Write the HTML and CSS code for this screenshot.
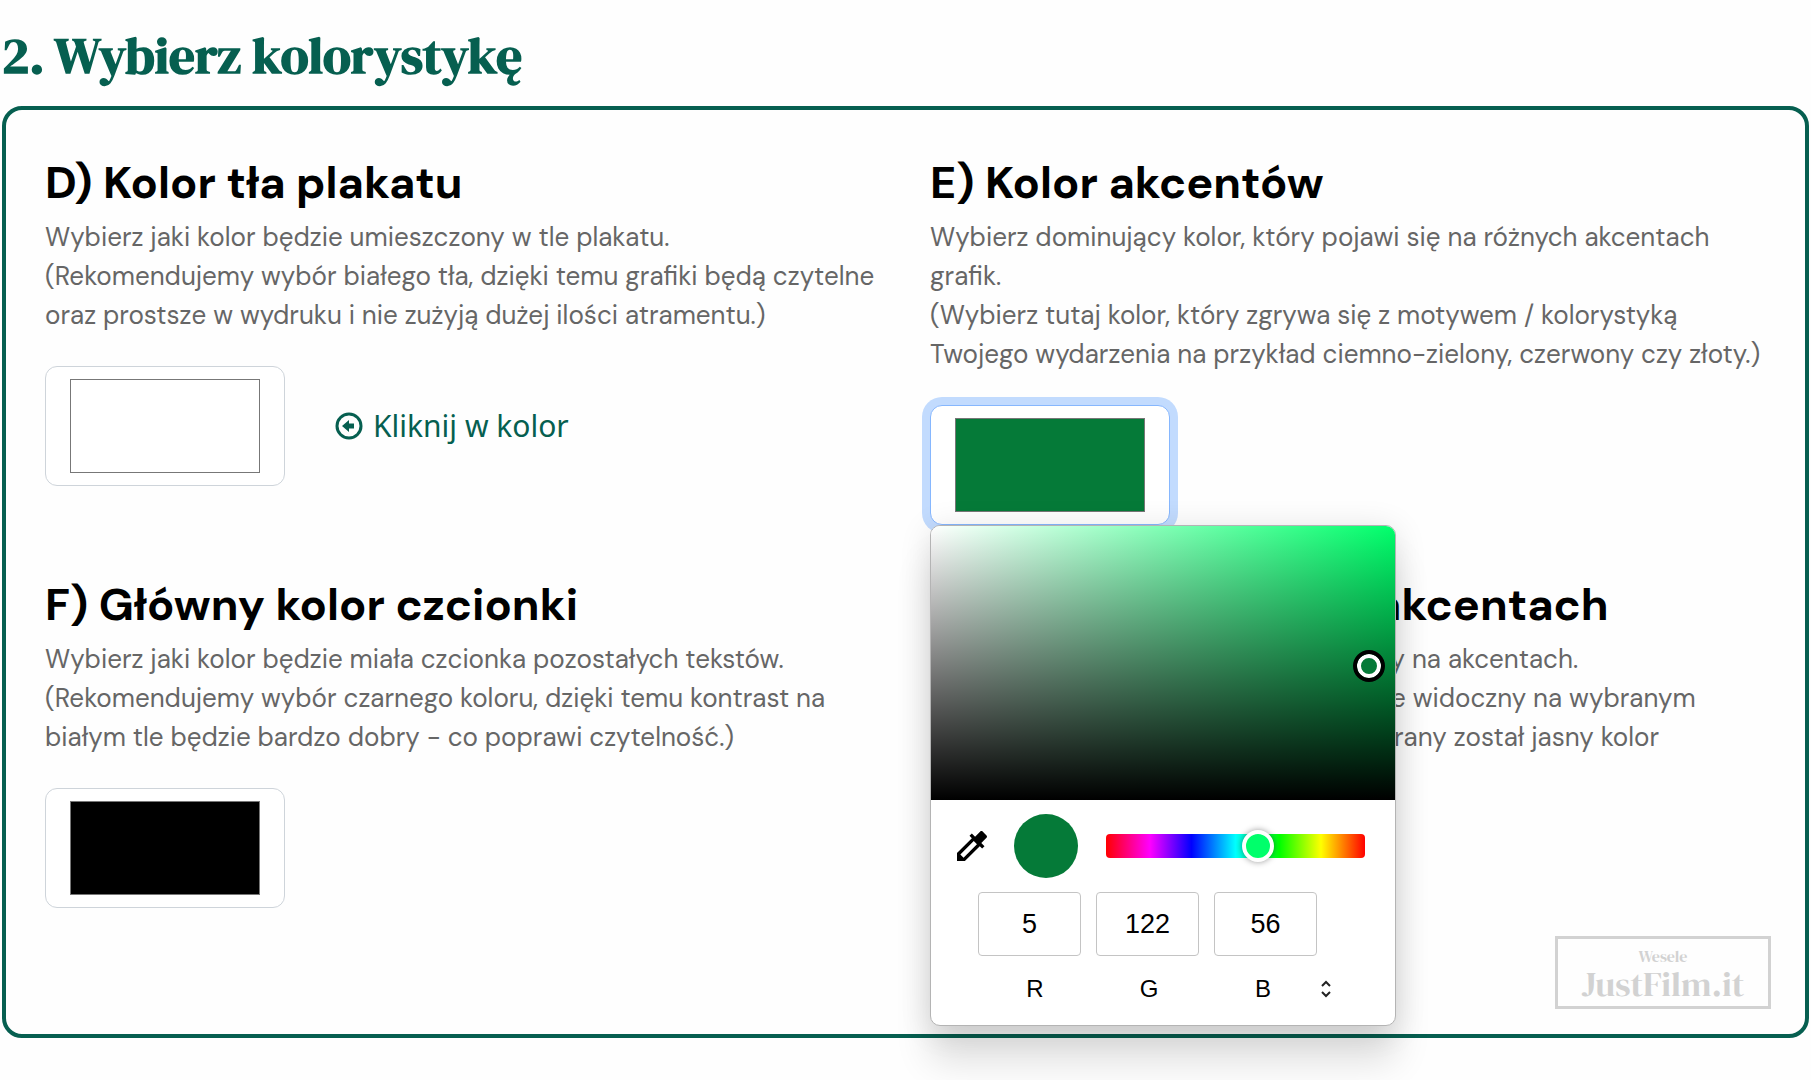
FILE: index.html
```html
<!DOCTYPE html>
<html lang="pl">
<head>
<meta charset="utf-8">
<title>Wybierz kolorystykę</title>
<link rel="stylesheet" href="styles.css">
</head>
<body>
<main class="page">
  <h2 class="page-title">2. Wybierz kolorystykę</h2>
  <section class="panel">
    <div class="option">
      <h3 class="option-title"><label for="background">D) Kolor tła plakatu</label></h3>
      <p class="option-text">Wybierz jaki kolor będzie umieszczony w tle plakatu.<br>(Rekomendujemy wybór białego tła, dzięki temu grafiki będą czytelne oraz prostsze w wydruku i nie zużyją dużej ilości atramentu.)</p>
      <div class="picker-row">
        <input class="swatch" type="color" id="background" value="#ffffff">
        <span class="hint">
          <svg class="hint-icon" viewBox="0 0 28 28" aria-hidden="true"><circle cx="14" cy="14" r="12" fill="none" stroke="currentColor" stroke-width="3"/><path d="M7 14l7-6v3.500h5v5h-5V20z" fill="currentColor"/></svg>
          Kliknij w kolor
        </span>
      </div>
    </div>

    <div class="option">
      <h3 class="option-title"><label for="accent">E) Kolor akcentów</label></h3>
      <p class="option-text">Wybierz dominujący kolor, który pojawi się na różnych akcentach grafik.<br>(Wybierz tutaj kolor, który zgrywa się z motywem / kolorystyką Twojego wydarzenia na przykład ciemno-zielony, czerwony czy złoty.)</p>
      <div class="picker-row">
        <input class="swatch swatch-active" type="color" id="accent" value="#057a38">
        <div class="popup">
          <div class="shade"><span class="shade-handle"></span></div>
          <div class="popup-tools">
            <button class="dropper" type="button" aria-label="Pobierz kolor z ekranu">
              <svg viewBox="0 0 24 24" width="40" height="40" aria-hidden="true"><path d="M20.710 5.630l-2.340-2.340c-.39-.39-1.020-.39-1.410 0l-3.120 3.120-1.930-1.910-1.410 1.410 1.420 1.420L3 16.250V21h4.750l8.920-8.920 1.420 1.420 1.410-1.410-1.920-1.920 3.120-3.120c.4-.4.4-1.030.01-1.420zM6.920 19L5 17.080l8.060-8.060 1.920 1.920L6.920 19z"/></svg>
            </button>
            <span class="preview"></span>
            <input class="hue" type="range" min="0" max="100" value="60" aria-label="Odcień">
          </div>
          <div class="channels">
            <input class="channel" type="text" id="red" value="5">
            <input class="channel" type="text" id="green" value="122">
            <input class="channel" type="text" id="blue" value="56">
          </div>
          <div class="channel-names">
            <label for="red">R</label>
            <label for="green">G</label>
            <label for="blue">B</label>
            <button class="format" type="button" aria-label="Zmień format">
              <svg viewBox="0 0 12 18" width="12" height="18" aria-hidden="true"><path d="M2 6l4-4 4 4M2 12l4 4 4-4" fill="none" stroke="#222" stroke-width="2"/></svg>
            </button>
          </div>
        </div>
      </div>
    </div>

    <div class="option">
      <h3 class="option-title"><label for="font">F) Główny kolor czcionki</label></h3>
      <p class="option-text">Wybierz jaki kolor będzie miała czcionka pozostałych tekstów.<br>(Rekomendujemy wybór czarnego koloru, dzięki temu kontrast na białym tle będzie bardzo dobry - co poprawi czytelność.)</p>
      <div class="picker-row">
        <input class="swatch" type="color" id="font" value="#000000">
      </div>
    </div>

    <div class="option">
      <h3 class="option-title"><label for="accent-font">G) Kolor czcionki na akcentach</label></h3>
      <p class="option-text">Wybierz jaki kolor czcionki będzie użyty na akcentach.<br>(Wybierz taki kolor, który będzie dobrze widoczny na wybranym akcencie, na przykład ciemny, gdy wybrany został jasny kolor<br>akcentów.)</p>
      <div class="picker-row">
        <input class="swatch" type="color" id="accent-font" value="#ffffff">
      </div>
    </div>

    <div class="brand"><span class="brand-top">Wesele</span><span class="brand-name">JustFilm.it</span></div>
  </section>
</main>
</body>
</html>
```
FILE: styles.css
```css
* { box-sizing: border-box; }

body {
  margin: 0;
  min-height: 100vh;
  background: #fefefe;
  color: #000;
  font-family: "DM Sans", Inter, sans-serif;
}

h2, h3, p { margin: 0; }

.page { padding: 23px 2px 42px; }

.page-title {
  font: 700 51px/64px "DM Serif Display", "Liberation Serif", serif;
  color: #065f50;
}

.panel {
  position: relative;
  display: grid;
  grid-template-columns: 1fr 1fr;
  gap: 52px 49px;
  margin-top: 19px;
  padding: 45px 39px 87px;
  border: 4px solid #065f50;
  border-radius: 20px;
}

.option-title {
  font-size: 45px;
  font-weight: 700;
  line-height: 56px;
  white-space: nowrap;
}

.option-text {
  margin: 7px 0 31px;
  font-size: 26px;
  line-height: 39px;
  color: #666;
}

.picker-row {
  position: relative;
  display: flex;
  align-items: center;
  gap: 50px;
}

.swatch {
  width: 240px;
  height: 120px;
  padding: 12px 24px;
  border: 1px solid #ced4da;
  border-radius: 12px;
  background: #fff;
}

.swatch::-webkit-color-swatch-wrapper { padding: 0; }
.swatch::-webkit-color-swatch { border: 1px solid #777; border-radius: 0; }

.swatch-active {
  border-color: #86b7fe;
  box-shadow: 0 0 0 8px #c2dbfe;
}

.hint {
  display: flex;
  align-items: center;
  gap: 10px;
  font: 30px/40px "Noto Sans", sans-serif;
  color: #065f50;
}

.hint-icon { width: 28px; height: 28px; }

.popup {
  position: absolute;
  z-index: 2;
  top: 100%;
  left: 0;
  width: 466px;
  overflow: hidden;
  border: 1px solid #b4b4b4;
  border-radius: 10px;
  background: #fff;
  box-shadow: 0 36px 36px rgba(0, 0, 0, 0.12), 0 4px 32px rgba(0, 0, 0, 0.12);
  font-family: "Liberation Sans", sans-serif;
}

.shade {
  position: relative;
  height: 274px;
  background:
    linear-gradient(to top, #000, transparent),
    linear-gradient(to right, #fff, #00ff6b);
}

.shade-handle {
  position: absolute;
  top: 51%;
  right: 10px;
  width: 32px;
  height: 32px;
  margin-top: -16px;
  border: 4px solid #000;
  border-radius: 50%;
  background: #057a38;
  box-shadow: inset 0 0 0 4px #fff;
}

.popup-tools {
  display: flex;
  align-items: center;
  padding: 14px 30px 14px 21px;
}

button {
  padding: 0;
  border: 0;
  background: none;
}

svg { display: block; }

.preview {
  width: 64px;
  height: 64px;
  margin: 0 28px 0 22px;
  border-radius: 50%;
  background: #057a38;
}

.hue {
  flex: 1;
  min-width: 0;
  height: 32px;
  margin: 0;
  appearance: none;
  background: none;
}

.hue::-webkit-slider-runnable-track {
  height: 24px;
  border-radius: 4px;
  background: linear-gradient(to right, #f00, #f0f 17%, #00f 33%, #0ff 50%, #0f0 67%, #ff0 83%, #f00);
}

.hue::-webkit-slider-thumb {
  appearance: none;
  width: 32px;
  height: 32px;
  margin-top: -4px;
  border: 4px solid #fff;
  border-radius: 50%;
  background: #00ff6b;
  box-shadow: 0 0 6px rgba(0, 0, 0, 0.4);
}

.channels {
  display: flex;
  gap: 15px;
  padding-left: 47px;
}

.channel {
  width: 103px;
  height: 64px;
  padding: 0;
  border: 1px solid #c4c4c4;
  border-radius: 4px;
  font: 27px "Liberation Sans", sans-serif;
  text-align: center;
}

.channel-names {
  display: flex;
  padding: 17px 0 20px 47px;
  font-size: 24px;
  line-height: 32px;
}

.channel-names label {
  width: 114px;
  text-align: center;
}

.brand {
  position: absolute;
  right: 34px;
  bottom: 25px;
  width: 216px;
  padding: 8px 0 3px;
  border: 3px solid #d2d2d2;
  color: #d2d2d2;
  font-family: "DM Serif Display", "Liberation Serif", serif;
  font-weight: 400;
  text-align: center;
}

.brand span { display: block; }
.brand-top { font-size: 16px; line-height: 18px; }
.brand-name { font-size: 35px; line-height: 38px; }
```
